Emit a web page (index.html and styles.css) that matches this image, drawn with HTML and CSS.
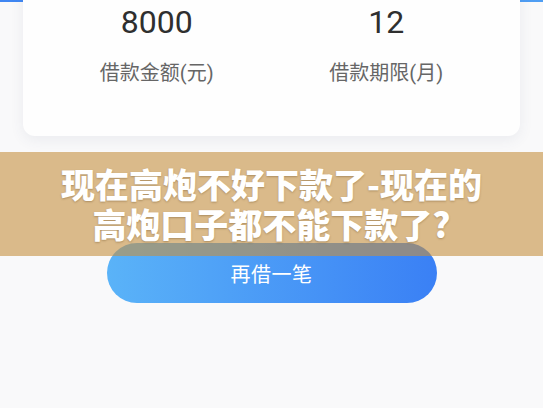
FILE: index.html
```html
<!DOCTYPE html>
<html lang="zh-CN">
<head>
<meta charset="utf-8">
<title>借款详情</title>
<link rel="stylesheet" href="styles.css">
</head>
<body>
  <div class="hero"></div>
  <main class="page">
    <section class="card">
      <div class="stats">
        <div class="stat">
          <div class="stat-value">8000</div>
          <div class="stat-label">借款金额(元)</div>
        </div>
        <div class="stat">
          <div class="stat-value">12</div>
          <div class="stat-label">借款期限(月)</div>
        </div>
      </div>
    </section>
    <button class="btn-primary" type="button">再借一笔</button>
  </main>
  <div class="title-banner">
    <h1 class="title-text">
      <span class="title-line">现在高炮不好下款了-现在的</span>
      <span class="title-line">高炮口子都不能下款了?</span>
    </h1>
  </div>
</body>
</html>
```
FILE: styles.css
```css
html, body {
  margin: 0;
  padding: 0;
}

body {
  position: relative;
  height: 408px;
  overflow: hidden;
  background: #f9f9fa;
  font-family: Roboto, "Noto Sans CJK SC", sans-serif;
}

/* blue header strip behind the summary card */
.hero {
  height: 2px;
  background: linear-gradient(90deg, #3f86f2, #4f9ef3);
}

.page {
  display: flex;
  flex-direction: column;
  align-items: center;
}

.card {
  align-self: stretch;
  margin: -20px 23px 0;
  padding: 24px 19px 49px;
  background: #fefefe;
  border-radius: 12px;
  box-shadow: 0 4px 14px rgba(60, 80, 120, 0.08);
}

.stats {
  display: grid;
  grid-template-columns: 1fr 1fr;
}

.stat {
  display: flex;
  flex-direction: column;
  align-items: center;
  gap: 21px;
}

.stat-value {
  font-size: 32px;
  line-height: 32px;
  color: #2f2f2f;
}

.stat-label {
  font-size: 20px;
  line-height: 28px;
  color: #666;
}

.btn-primary {
  margin-top: 107px;
  width: 330px;
  height: 60px;
  border: 0;
  border-radius: 30px;
  background: linear-gradient(90deg, #5ab3f8, #3a80f5);
  color: #fff;
  font-family: "Noto Sans CJK SC", sans-serif;
  font-size: 20px;
  letter-spacing: 0.5px;
  padding: 0;
}

/* translucent title band laid over the page */
.title-banner {
  position: absolute;
  top: 152px;
  left: 0;
  right: 0;
  height: 104px;
  display: flex;
  align-items: center;
  justify-content: center;
  background: rgba(196, 143, 64, 0.6);
}

.title-text {
  margin: 0;
  display: flex;
  flex-direction: column;
  align-items: center;
  color: #fff;
  font-family: "Noto Sans CJK SC", sans-serif;
  font-weight: 900;
  font-size: 34px;
  line-height: 40px;
  text-shadow: 0 1px 2px rgba(90, 60, 20, 0.35);
}

.title-line {
  display: block;
  height: 40px;
}
```
